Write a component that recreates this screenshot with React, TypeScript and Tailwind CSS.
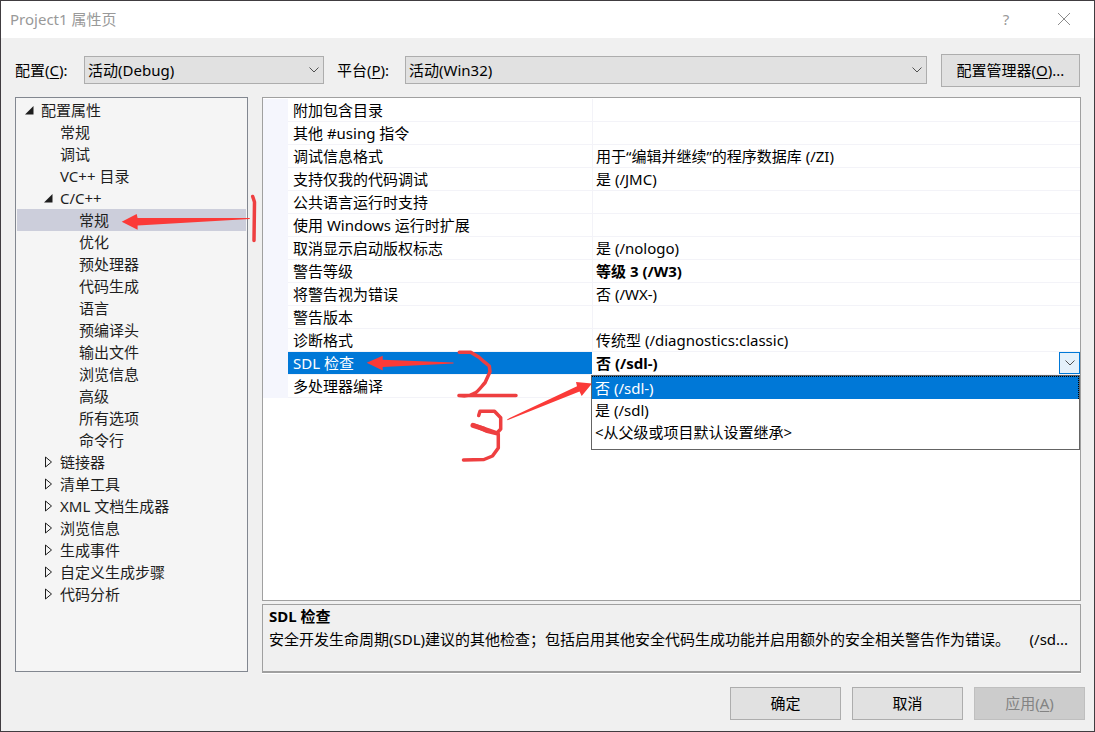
import React, { useState } from 'react';

type TreeNode = {
  id: string;
  label: string;
  level: 0 | 1 | 2;
  state?: 'open' | 'closed';
};

const treeNodes: TreeNode[] = [
  { id: 'root', label: '配置属性', level: 0, state: 'open' },
  { id: 'general', label: '常规', level: 1 },
  { id: 'debugging', label: '调试', level: 1 },
  { id: 'vc-dirs', label: 'VC++ 目录', level: 1 },
  { id: 'cpp', label: 'C/C++', level: 1, state: 'open' },
  { id: 'cpp-general', label: '常规', level: 2 },
  { id: 'cpp-optimization', label: '优化', level: 2 },
  { id: 'cpp-preprocessor', label: '预处理器', level: 2 },
  { id: 'cpp-codegen', label: '代码生成', level: 2 },
  { id: 'cpp-language', label: '语言', level: 2 },
  { id: 'cpp-pch', label: '预编译头', level: 2 },
  { id: 'cpp-output', label: '输出文件', level: 2 },
  { id: 'cpp-browse', label: '浏览信息', level: 2 },
  { id: 'cpp-advanced', label: '高级', level: 2 },
  { id: 'cpp-all', label: '所有选项', level: 2 },
  { id: 'cpp-cmd', label: '命令行', level: 2 },
  { id: 'linker', label: '链接器', level: 1, state: 'closed' },
  { id: 'manifest', label: '清单工具', level: 1, state: 'closed' },
  { id: 'xml', label: 'XML 文档生成器', level: 1, state: 'closed' },
  { id: 'browse', label: '浏览信息', level: 1, state: 'closed' },
  { id: 'events', label: '生成事件', level: 1, state: 'closed' },
  { id: 'custom', label: '自定义生成步骤', level: 1, state: 'closed' },
  { id: 'analysis', label: '代码分析', level: 1, state: 'closed' },
];

const indent = {
  0: 'pl-[7px]',
  1: 'pl-[26px]',
  2: 'pl-[45px]',
};

const properties = [
  { name: '附加包含目录', value: '' },
  { name: '其他 #using 指令', value: '' },
  { name: '调试信息格式', value: '用于“编辑并继续”的程序数据库 (/ZI)' },
  { name: '支持仅我的代码调试', value: '是 (/JMC)' },
  { name: '公共语言运行时支持', value: '' },
  { name: '使用 Windows 运行时扩展', value: '' },
  { name: '取消显示启动版权标志', value: '是 (/nologo)' },
  { name: '警告等级', value: '等级 3 (/W3)', bold: true },
  { name: '将警告视为错误', value: '否 (/WX-)' },
  { name: '警告版本', value: '' },
  { name: '诊断格式', value: '传统型 (/diagnostics:classic)' },
  { name: 'SDL 检查', value: '否 (/sdl-)', bold: true, editing: true },
  { name: '多处理器编译', value: '' },
];

const sdlOptions = ['否 (/sdl-)', '是 (/sdl)', '<从父级或项目默认设置继承>'];

const Chevron = () => (
  <svg width="12" height="8" viewBox="0 0 12 8" fill="none" stroke="#505050" strokeWidth="1">
    <path d="M1.5 1.5 6 6l4.5-4.5" />
  </svg>
);

const Expander = ({ state }: { state?: 'open' | 'closed' }) => (
  <span className="flex w-4 shrink-0 items-center pl-px">
    {state === 'open' && (
      <svg width="9" height="9" viewBox="0 0 9 9">
        <path d="M8.5 0v8.5H0z" fill="#1e1e1e" />
      </svg>
    )}
    {state === 'closed' && (
      <svg width="9" height="12" viewBox="0 0 9 12">
        <path d="M1.5 1v10L7.500 6z" fill="none" stroke="#1e1e1e" />
      </svg>
    )}
  </span>
);

// Hand-drawn step marks that sit over the dialog
const StepMarks = () => (
  <svg
    className="pointer-events-none absolute -top-px -left-px"
    width="620"
    height="480"
    viewBox="0 0 620 480"
    aria-hidden="true"
  >
    <g fill="#fb3a38">
      <path d="M121.7 221.7 136.7 214l.9 4L250 218l-.5 1-111.9 6.5v4.200z" />
      <path d="M366.7 362.7 382.7 355.7v4L453.5 362.5v1L382.7 367v3.500z" />
      <path d="M592 383.5 576 382l1 4.200L507.300 419.200v1L579.500 391.500 581.700 396z" />
    </g>
    <g fill="none" stroke="#ee3f40" strokeWidth="3.5" strokeLinecap="round" strokeLinejoin="round">
      <path d="M252.7 196.5 254.5 202 254 240.5" />
      <path d="M459.3 352.3H470.7L479 357.300 484 361.700 489.300 366 490 371.700 485 382.700C481 387 478 392 474 393.500 470 396 465 396.500 459 395.500H516" />
      <path d="M478.700 415.500 480 411.300H494.500L500.700 417.700V429L497 433 488.500 430 473 425 486 431 498.300 434V448L492.500 456 484 459.500 463.500 460" />
      <path d="M473 425.300 484 429" strokeWidth="5" />
    </g>
  </svg>
);

const App = () => {
  const [config, setConfig] = useState('debug');
  const [platform, setPlatform] = useState('win32');
  const [selectedNode, setSelectedNode] = useState('cpp-general');
  const [sdl, setSdl] = useState(sdlOptions[0]);
  const [listOpen, setListOpen] = useState(true);

  return (
    <div className="relative flex min-h-screen w-full flex-col border border-[#403c40] bg-[#f0f0f0] font-['Noto_Sans','Noto_Sans_CJK_SC',sans-serif] text-[15px] leading-[22px] text-black">
      {/* Title bar */}
      <header className="flex h-[37px] items-center justify-between bg-white pr-px pb-px pl-[9px] text-[#999999]">
        <h1>Project1 属性页</h1>
        <div className="flex h-full">
          <button type="button" aria-label="帮助" className="flex w-[58px] items-center justify-center">
            ?
          </button>
          <button type="button" aria-label="关闭" className="flex w-[58px] items-center justify-center">
            <svg width="14" height="14" viewBox="0 0 14 14" stroke="#8c8c8c" strokeWidth="1">
              <path d="M1 1 13 13M13 1 1 13" />
            </svg>
          </button>
        </div>
      </header>

      {/* Configuration row */}
      <div className="flex items-start px-[14px] pt-4 pb-[10px]">
        <div className="flex flex-1 items-center pt-[2px]">
          <label htmlFor="config" className="w-[69px] shrink-0">
            配置(<u className="underline-offset-2">C</u>):
          </label>
          <div className="relative w-60">
            <select
              id="config"
              value={config}
              onChange={(e) => setConfig(e.target.value)}
              className="block h-7 w-full appearance-none border border-[#adadad] bg-[#e1e1e1] pl-[3px]"
            >
              <option value="debug">活动(Debug)</option>
              <option value="release">Release</option>
            </select>
            <span className="pointer-events-none absolute inset-y-0 right-1 flex items-center">
              <Chevron />
            </span>
          </div>
          <label htmlFor="platform" className="ml-[13px] w-[68px] shrink-0">
            平台(<u className="underline-offset-2">P</u>):
          </label>
          <div className="relative flex-1">
            <select
              id="platform"
              value={platform}
              onChange={(e) => setPlatform(e.target.value)}
              className="block h-7 w-full appearance-none border border-[#adadad] bg-[#e1e1e1] pl-[3px]"
            >
              <option value="win32">活动(Win32)</option>
              <option value="x64">x64</option>
            </select>
            <span className="pointer-events-none absolute inset-y-0 right-1 flex items-center">
              <Chevron />
            </span>
          </div>
        </div>
        <button type="button" className="ml-[14px] h-[33px] w-[139px] border border-[#adadad] bg-[#e1e1e1] pb-[2px]">
          配置管理器(<u className="underline-offset-2">O</u>)...
        </button>
      </div>

      <main className="flex flex-1 gap-[14px] pr-[13px] pl-[14px]">
        {/* Category tree */}
        <ul role="tree" className="mb-px w-[233px] shrink-0 border border-[#828790] bg-[#f5f5f5] p-px text-[#1e1e1e]">
          {treeNodes.map((node) => (
            <li key={node.id} role="treeitem" aria-selected={node.id === selectedNode}>
              <button
                type="button"
                onClick={() => setSelectedNode(node.id)}
                className={`flex h-[22px] w-full items-center text-left ${indent[node.level]} ${
                  node.id === selectedNode ? 'bg-[#cccedb]' : ''
                }`}
              >
                <Expander state={node.state} />
                <span className="pl-px">{node.label}</span>
              </button>
            </li>
          ))}
        </ul>

        <div className="flex min-w-0 flex-1 flex-col gap-[3px]">
          {/* Property grid */}
          <div className="flex-1 border border-[#a0a0a0] bg-white pt-px">
            <table className="w-full table-fixed border-separate border-spacing-0">
              <colgroup>
                <col className="w-[25px]" />
                <col className="w-[304px]" />
                <col />
              </colgroup>
              <tbody>
                {properties.map((prop) => (
                  <tr key={prop.name} className="h-[23px]">
                    <td className="bg-[#f5f6fd] p-0"></td>
                    <th
                      scope="row"
                      className={`border-b border-[#f3f3f8] bg-clip-padding p-0 pl-[5px] text-left font-normal ${
                        prop.editing ? 'bg-[#0078d7] text-white' : ''
                      }`}
                    >
                      {prop.name}
                    </th>
                    {prop.editing ? (
                      <td className="relative border-b border-[#f3f3f8] p-0">
                        <div className="flex h-[22px]">
                          <select
                            aria-label={prop.name}
                            value={sdl}
                            onChange={(e) => setSdl(e.target.value)}
                            className="h-full min-w-0 flex-1 appearance-none pl-1 font-bold"
                          >
                            {sdlOptions.map((option) => (
                              <option key={option}>{option}</option>
                            ))}
                          </select>
                          <button
                            type="button"
                            aria-label="展开"
                            onClick={() => setListOpen(!listOpen)}
                            className="flex w-[21px] items-center justify-center border border-[#0078d7] bg-[#e5f1fb]"
                          >
                            <Chevron />
                          </button>
                        </div>
                        {listOpen && (
                          <ul
                            role="listbox"
                            className="absolute top-full right-0 -left-px z-10 mt-px border border-[#646464] bg-white pb-[6px]"
                          >
                            {sdlOptions.map((option) => (
                              <li
                                key={option}
                                role="option"
                                aria-selected={option === sdl}
                                onClick={() => setSdl(option)}
                                className={`pl-[3px] ${
                                  option === sdl
                                    ? 'border-t border-r border-dotted border-t-black border-r-black bg-[#0078d7] text-white'
                                    : ''
                                }`}
                              >
                                {option}
                              </li>
                            ))}
                          </ul>
                        )}
                      </td>
                    ) : (
                      <td
                        className={`border-b border-l border-[#f3f3f8] p-0 pl-[3px] ${prop.bold ? 'font-bold' : ''}`}
                      >
                        {prop.value}
                      </td>
                    )}
                  </tr>
                ))}
              </tbody>
            </table>
          </div>

          {/* Description of the selected property */}
          <section className="h-[69px] border border-b-2 border-[#a0a0a0] px-[6px] leading-[23px] shadow-[0_1px_0_#ffffff]">
            <h2 className="font-bold">SDL 检查</h2>
            <p className="overflow-hidden whitespace-pre">
              安全开发生命周期(SDL)建议的其他检查；包括启用其他安全代码生成功能并启用额外的安全相关警告作为错误。{'     '}(/sd...
            </p>
          </section>
        </div>
      </main>

      <footer className="flex justify-end gap-[11px] pt-[14px] pr-[9px] pb-[11px]">
        <button type="button" className="h-[33px] w-[111px] border border-[#adadad] bg-[#e1e1e1] pb-[2px]">
          确定
        </button>
        <button type="button" className="h-[33px] w-[111px] border border-[#adadad] bg-[#e1e1e1] pb-[2px]">
          取消
        </button>
        <button
          type="button"
          disabled
          className="h-[33px] w-[111px] border border-[#bfbfbf] bg-[#cccccc] pb-[2px] text-[#838383]"
        >
          应用(<u className="underline-offset-2">A</u>)
        </button>
      </footer>

      <StepMarks />
    </div>
  );
};

export default App;
